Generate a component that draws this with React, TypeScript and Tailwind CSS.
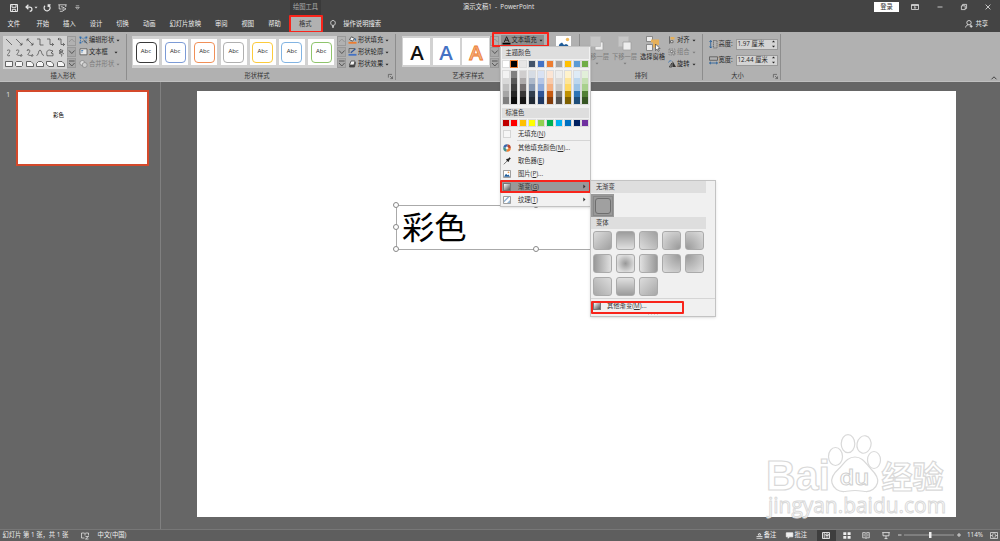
import type { ReactNode } from "react";
import clsx from "clsx";

const TABS = ["开始", "插入", "设计", "切换", "动画", "幻灯片放映", "审阅", "视图", "帮助"];

const SHAPE_STYLES = [
  "border-[#3a3a3a]",
  "border-[#7c9bd6]",
  "border-[#f09058]",
  "border-[#b0b0b0]",
  "border-[#fccb3c]",
  "border-[#82b4e2]",
  "border-[#8fc46c]",
];

// 每列：主色 + 五个深浅
const THEME_COLORS = [
  ["#ffffff", "#f2f2f2", "#d9d9d9", "#bfbfbf", "#a6a6a6", "#7f7f7f"],
  ["#000000", "#7f7f7f", "#595959", "#3f3f3f", "#262626", "#0c0c0c"],
  ["#e7e6e6", "#d0cece", "#aeabab", "#757070", "#3a3838", "#171616"],
  ["#44546a", "#d6dce4", "#adb9ca", "#8496b0", "#323f4f", "#222a35"],
  ["#4472c4", "#d9e2f3", "#b4c6e7", "#8eaadb", "#2f5496", "#1f3864"],
  ["#ed7d31", "#fbe5d5", "#f7cbac", "#f4b183", "#c55a11", "#833c0b"],
  ["#a5a5a5", "#ededed", "#dbdbdb", "#c9c9c9", "#7b7b7b", "#525252"],
  ["#ffc000", "#fff2cc", "#fee599", "#ffd965", "#bf9000", "#7f6000"],
  ["#5b9bd5", "#deebf6", "#bdd7ee", "#9cc3e5", "#2e75b5", "#1e4e79"],
  ["#70ad47", "#e2efd9", "#c5e0b3", "#a8d08d", "#538135", "#375623"],
];

const STANDARD_COLORS = [
  "#c00000", "#ff0000", "#ffc000", "#ffff00", "#92d050",
  "#00b050", "#00b0f0", "#0070c0", "#002060", "#7030a0",
];

const VARIANTS = [
  "linear-gradient(135deg,#dcdcdc,#a0a0a0)",
  "linear-gradient(180deg,#9c9c9c,#e0e0e0)",
  "linear-gradient(225deg,#a0a0a0,#dcdcdc)",
  "radial-gradient(circle at 100% 100%,#989898,#dedede)",
  "radial-gradient(circle at 0% 100%,#989898,#dedede)",
  "linear-gradient(90deg,#989898,#e0e0e0)",
  "radial-gradient(circle,#989898,#dedede 75%)",
  "linear-gradient(270deg,#989898,#e0e0e0)",
  "radial-gradient(circle at 100% 0%,#989898,#dedede)",
  "radial-gradient(circle at 0% 0%,#989898,#dedede)",
  "linear-gradient(45deg,#a8a8a8,#dcdcdc)",
  "linear-gradient(0deg,#9c9c9c,#e0e0e0)",
  "linear-gradient(315deg,#a8a8a8,#dcdcdc)",
];

function Svg({ w, h, children, className }: { w: number; h: number; children: ReactNode; className?: string }) {
  return (
    <svg
      width={w}
      height={h}
      viewBox={`0 0 ${w} ${h}`}
      fill="none"
      stroke="currentColor"
      strokeWidth="0.8"
      className={clsx("shrink-0 overflow-visible", className)}
    >
      {children}
    </svg>
  );
}

function Caret() {
  return (
    <Svg w={4} h={3}>
      <path d="M0.5 0.7h3L2 2.4z" fill="currentColor" stroke="none" />
    </Svg>
  );
}

function Launcher() {
  return (
    <Svg w={5} h={5} className="text-[#444]">
      <path d="M0.4 3.6V0.4H4M2 2l2.4 2.4M4.5 2.4v2.2H2.3" strokeWidth="0.6" />
    </Svg>
  );
}

// 库右侧的三段滚动按钮
function GalleryScroll() {
  return (
    <div className="flex w-[9px] flex-col gap-px">
      {["M2 6l2.8-3 2.8 3", "M2 3.5l2.8 3 2.8-3", "M2 3h5.6M2 5l2.8 3 2.8-3"].map((d, i) => (
        <div
          key={d}
          className={clsx("h-[10px] border border-[#999]", i === 0 ? "text-[#888]" : "bg-[#a8a8a8] text-[#333]")}
        >
          <Svg w={8} h={9} className="-ml-px -mt-px">
            <path d={d} strokeWidth="0.7" />
          </Svg>
        </div>
      ))}
    </div>
  );
}

function Command({ icon, label, disabled, wide }: { icon: ReactNode; label: string; disabled?: boolean; wide?: boolean }) {
  return (
    <div className={clsx("flex h-[12px] items-center gap-px", disabled && "text-[#7c7c7c]")}>
      {icon}
      <span>{label}</span>
      <span className={wide ? "ml-[5px]" : "ml-px"}>
        <Caret />
      </span>
    </div>
  );
}

function Group({ label, width, labelPad, launcher, children }: {
  label: string;
  width: string;
  labelPad?: string;
  launcher?: boolean;
  children: ReactNode;
}) {
  return (
    <section className={clsx("flex h-[46px] flex-col border-r border-[#8d8d8d]", width)}>
      <div className="flex h-[37px] items-start">{children}</div>
      <div className={clsx("relative flex h-[9px] items-center justify-center text-[#333]", labelPad)}>
        {label}
        {launcher && (
          <span className="absolute right-[2px] top-[3px]">
            <Launcher />
          </span>
        )}
      </div>
    </section>
  );
}

function TitleBar() {
  return (
    <header className="relative flex h-[15px] items-center bg-[#444] text-[#e6e6e6]">
      <div className="flex items-center pl-[10px]">
        <Svg w={8} h={8}>
          <path d="M0.5 0.5h7v7h-7zM2 0.5v2.8h4V0.5M2.3 7.4V5.3h3.4v2.1" strokeWidth="1" />
        </Svg>
        <Svg w={8} h={8} className="ml-[7px]">
          <path d="M3.4 0.8L1 3.1l2.4 2.2M1 3.1h3.7c3 0 3 4 0 4.2" strokeWidth="1.2" />
        </Svg>
        <span className="ml-px"><Caret /></span>
        <Svg w={8} h={8} className="ml-[5px]">
          <path d="M5.5 1.2A3 3 0 1 1 2 1.7M5.2 3V0.8h2.4" strokeWidth="1.2" />
        </Svg>
        <Svg w={9} h={8} className="ml-[7px]">
          <path d="M0.3 0.8h8.4M1.2 1v4h2.4M7.8 1v2M2.8 2.8h2M1.8 7.3h3M5 3.2l3 1.7-3 1.8z" />
        </Svg>
        <Svg w={5} h={5} className="ml-[8px]">
          <path d="M0.8 0.8h3.4M0.7 2.4h3.6L2.5 4.3z" strokeWidth="0.6" />
        </Svg>
      </div>
      <div className="absolute left-[290px] top-0 flex h-[15px] w-[31px] items-center justify-center bg-[#3a3a3a] pb-[2px] text-[#aaa]">
        绘图工具
      </div>
      <div className="absolute left-[463px] top-0 flex h-[13px] items-center whitespace-pre">
        {"演示文稿1  -  PowerPoint"}
      </div>
      <div className="ml-auto flex items-center pb-px">
        <span className="flex h-[10px] w-[25px] items-center justify-center bg-white text-[#333]">登录</span>
        <Svg w={8} h={6} className="ml-[12px]">
          <path d="M0.5 0.5h7v5h-7zM0.5 1.5h7M4 5V2.7M2.9 3.7L4 2.6l1.1 1.1" />
        </Svg>
        <Svg w={6} h={6} className="ml-[18px]">
          <path d="M0.5 3h5" />
        </Svg>
        <Svg w={6} h={6} className="ml-[18px]">
          <path d="M0.4 1.8h3.8v3.8H0.4zM1.6 1.8V0.4h4v4H4.2" />
        </Svg>
        <Svg w={6} h={6} className="ml-[18px] mr-[9px]">
          <path d="M0.6 0.6l4.8 4.8M5.4 0.6L0.6 5.4" />
        </Svg>
      </div>
    </header>
  );
}

function TabRow() {
  return (
    <nav className="flex h-[17px] items-center bg-[#444] text-[#efefef]">
      <span className="w-[36.5px] pl-[7.5px]">文件</span>
      <div className="flex gap-[14px]">
        {TABS.map((t) => (
          <span key={t}>{t}</span>
        ))}
      </div>
      <span className="ml-[8.5px] flex h-[18px] w-[34px] items-center justify-center rounded-[1px] border-2 border-[#f8241b] bg-[#b1b1b1] pr-[2px] text-[#333]">
        格式
      </span>
      <Svg w={6} h={8} className="ml-[7px]">
        <path d="M1.8 5.3C0 3.6 0.5 0.5 3 0.5s3 3.1 1.2 4.8zM2 6.4h2M2.3 7.5h1.4" />
      </Svg>
      <span className="ml-[7px]">操作说明搜索</span>
      <div className="ml-auto mr-[12px] flex items-center gap-[2px]">
        <Svg w={8} h={8}>
          <circle cx="4" cy="2.7" r="2.2" />
          <path d="M0.6 7.5c0.2-1.7 1.4-2.5 2.6-2.6M4.8 4.9l0.8 0.6M6.2 4.8v3M4.7 6.3h3" />
        </Svg>
        共享
      </div>
    </nav>
  );
}

const SHAPES = [
  "M1 1l6 6", "M1 1l6 6M7 4.8V7H4.8", "M1 1l6 6M7 4.8V7H4.8M1 3.2V1h2.2",
  "M1 1h3v6h3.5", "M1 1h3v5.5h3.5M6 5l1.6 1.5L6 8", "M1 1h3v5.5h3.5M6 5l1.6 1.5L6 8M2.2 0L1 1l1.2 1.4",
  "M2 1.5c4-2 3 1.5 1.5 3S2 7.5 5 6.5", "M1 1.5c4-2 3 1.5 1.5 3s0 2 4 2M6 5l1 1.5L5.5 8",
  "M1 1.5c4-2 3 1.5 1.5 3s0 2 4 2M6 5l1 1.5L5.5 8M2.5 0L1 1.5", "M0.5 6.5C3 6.5 2 1 4 1s1 5.5 4 5.5",
  "M3.5 1C0.5 1.5 0.5 3 1 6.8h6V4.5L5 4l2-2z", "M4 0.5L2 2l3 1-3 1 3 1.5L4.5 7.5M3 0.5l3 1-1 2 2 1.5",
];

const BOXES = [
  "M0.5 1.5h7v5h-7z", "M1.5 1.5h5l1 1v3l-1 1h-5l-1-1v-3z", "M0.5 1.5h4.5l2.5 2.5v2.5h-7z",
  "M0.5 6.5v-3l2-2h3l2 2v3z", "M0.5 1.5h4.5l2.5 2.5v2.5H3l-2.5-2z", "M0.5 6.5v-4l1-1h3.5l2.5 2.5v2.5z",
];

function InsertShapes() {
  return (
    <Group label="插入形状" width="w-[127px]">
      <div className="ml-[3px] mt-[2px] flex">
        <div className="grid h-[33px] w-[64px] grid-cols-6 items-center justify-items-center bg-[#d2d2d2] px-px text-[#444]">
          {SHAPES.map((d) => (
            <Svg key={d} w={8} h={8}>
              <path d={d} strokeWidth="0.7" />
            </Svg>
          ))}
          {BOXES.map((d) => (
            <Svg key={d} w={8} h={8}>
              <path d={d} fill="#f6f6f6" strokeWidth="0.8" />
            </Svg>
          ))}
        </div>
        <GalleryScroll />
      </div>
      <div className="ml-[3px]">
        <Command
          label="编辑形状"
          icon={
            <Svg w={9} h={8} className="text-[#2f6eb0]">
              <path d="M1.5 1.5L4 2.5l3-1v5l-3-1-2.5 1z" strokeDasharray="1.2 0.8" />
              <path d="M0.5 0.5h1.8v1.8H0.5zM6.5 0.5h1.8v1.8H6.5zM0.5 5.8h1.8v1.8H0.5z" fill="currentColor" stroke="none" />
              <path d="M4.5 4l3.8 3.5" stroke="#333" />
            </Svg>
          }
        />
        <Command
          wide
          label="文本框"
          icon={
            <Svg w={9} h={8} className="text-[#555]">
              <path d="M1 0.8h7v6H1z" fill="#e8e8e8" />
              <path d="M2.2 2.5h2M2.2 4h1.5" stroke="#2f6eb0" />
            </Svg>
          }
        />
        <Command
          disabled
          label="合并形状"
          icon={
            <Svg w={9} h={8} className="text-[#888]">
              <circle cx="3.3" cy="3" r="2.5" fill="#ddd" />
              <circle cx="5.7" cy="5" r="2.5" fill="#ccc" />
            </Svg>
          }
        />
      </div>
    </Group>
  );
}

function ShapeStylesGroup() {
  return (
    <Group label="形状样式" width="w-[269px]" labelPad="pr-[8px]" launcher>
      <div className="ml-[5px] mt-[2px] flex">
        <div className="flex h-[32px] w-[205px] items-center gap-[3.2px] bg-[#d2d2d2] pl-px">
          {SHAPE_STYLES.map((c) => (
            <div key={c} className="flex h-[26px] w-[26px] items-center justify-center bg-white">
              <div className={clsx("flex h-[21px] w-[21px] items-center justify-center rounded-[4px] border bg-white pb-[3px] text-[6px]", c)}>
                Abc
              </div>
            </div>
          ))}
        </div>
        <GalleryScroll />
      </div>
      <div className="ml-[2px]">
        <Command
          label="形状填充"
          icon={
            <Svg w={9} h={8} className="text-[#333]">
              <path d="M3.5 0.8L1.5 3.5l3 1.7 2-2.7z" fill="#f5f5f5" />
              <path d="M7 2.5l0.8 2" stroke="#2f6eb0" strokeWidth="1.2" />
              <path d="M0.5 6.8h8" stroke="#ed7d31" strokeWidth="1.8" />
            </Svg>
          }
        />
        <Command
          label="形状轮廓"
          icon={
            <Svg w={9} h={8} className="text-[#333]">
              <path d="M1 0.5h6M1 0.5V5" stroke="#555" />
              <path d="M2.8 4.7l4.7-4" stroke="#2f5496" strokeWidth="1.2" />
              <path d="M0.5 6.8h8" stroke="#4472c4" strokeWidth="1.8" />
            </Svg>
          }
        />
        <Command
          label="形状效果"
          icon={
            <Svg w={9} h={8} className="text-[#444]">
              <path d="M2.5 2.5h5l-1 4.5h-5z" fill="#444" />
              <path d="M3 1h4L6 5H1.5z" fill="#f4f4f4" />
            </Svg>
          }
        />
      </div>
    </Group>
  );
}

function WordArtGroup() {
  return (
    <Group label="艺术字样式" width="w-[184px]" labelPad="pr-[39px]">
      <div className="ml-[6px] mt-[2px] flex">
        <div className="flex h-[31px] w-[88px] items-center gap-[2.5px] bg-[#d2d2d2] pl-px">
          {["#111", "#4472c4", "#f4b183"].map((c, i) => (
            <div key={c} className="flex h-[27px] w-[27px] items-center justify-center bg-white">
              <svg width="20" height="22" viewBox="0 0 20 22" className="overflow-visible">
                <text
                  x="10"
                  y="18.5"
                  textAnchor="middle"
                  fontSize="20.5"
                  fontWeight="600"
                  fill={c}
                  stroke={i === 2 ? "#ed7d31" : "none"}
                  strokeWidth="0.8"
                >
                  A
                </text>
              </svg>
            </div>
          ))}
        </div>
        <GalleryScroll />
      </div>
      <div className="relative ml-[1.5px] mt-px">
        <div className="flex h-[10px] w-[43px] items-center bg-[#8f8f8f]">
          <Svg w={9} h={9} className="ml-px">
            <path d="M0.5 7.6h8" stroke="#000" strokeWidth="1.8" />
            <path d="M2.3 6l2.3-5.3L7 6M3.2 4.2h3" stroke="#222" strokeWidth="1" />
          </Svg>
          <span className="ml-px">文本填充</span>
          <span className="ml-[2px]"><Caret /></span>
        </div>
        <div className="absolute -left-[9px] -top-[3px] h-[15px] w-[57px] rounded-[1px] border-2 border-[#f8241b]" />
      </div>
      <Svg w={15} h={15} className="ml-[12.5px] mt-[2px]">
        <path d="M0 0h15v15H0z" fill="#fff" stroke="none" />
        <circle cx="11.5" cy="3.5" r="1.7" fill="#f0b95a" stroke="none" />
        <path d="M2 12l1.500-4 2.500-1.500L8 9l2-1 2 1 1 3z" fill="#1f5c99" stroke="none" />
      </Svg>
    </Group>
  );
}

function BigButton({ icon, label, width, disabled }: { icon: ReactNode; label: string; width: string; disabled?: boolean }) {
  return (
    <div className={clsx("mt-[2px] flex flex-col items-center", width, disabled && "text-[#7c7c7c]")}>
      <div className="h-[17px]">{icon}</div>
      <span>{label}</span>
      {disabled && <span className="mt-px"><Caret /></span>}
    </div>
  );
}

function ArrangeGroup() {
  return (
    <Group label="排列" width="w-[123px]">
      <BigButton
        disabled
        width="w-[27px] ml-[3px]"
        label="上移一层"
        icon={
          <Svg w={14} h={15} className="text-[#a0a0a0]">
            <path d="M5 6h8v8H5z" fill="#eee" />
            <path d="M0.5 0.5h10v10h-10z" fill="#c6c6c6" stroke="#bbb" />
          </Svg>
        }
      />
      <BigButton
        disabled
        width="w-[27px] ml-px"
        label="下移一层"
        icon={
          <Svg w={14} h={15} className="text-[#a0a0a0]">
            <path d="M0.5 0.5h10v10h-10z" fill="#c6c6c6" stroke="#bbb" />
            <path d="M5 6h8v8H5z" fill="#eee" />
          </Svg>
        }
      />
      <BigButton
        width="w-[27px] ml-px"
        label="选择窗格"
        icon={
          <Svg w={14} h={16} className="text-[#777]">
            <path d="M0.5 0.5h6v5h-6zM0.5 8.5h6v6h-6z" fill="#eee" />
            <path d="M5 5h6.5v2.5h-3v4" stroke="#e5b05a" strokeWidth="3" />
            <path d="M9.5 8v6.5l1.6-1.4 1.1 2.2 1-.5-1.1-2.2h2z" fill="#fff" stroke="#333" strokeWidth="0.6" />
          </Svg>
        }
      />
      <div className="ml-[2px]">
        <Command
          label="对齐"
          icon={
            <Svg w={8} h={8} className="text-[#555]">
              <path d="M1.5 0.3v7.4" />
              <path d="M2.5 1h4v2.5h-4z" fill="#e5b05a" stroke="none" />
              <path d="M2.5 4.7H5v2H2.5z" fill="#eee" />
            </Svg>
          }
        />
        <Command
          disabled
          label="组合"
          icon={
            <Svg w={8} h={8}>
              <path d="M1 1h6v6H1z" strokeDasharray="1.5 1" />
              <path d="M2.5 2.5H5v2H2.5zM4 4h2.5v2H4z" fill="#ddd" />
            </Svg>
          }
        />
        <Command
          label="旋转"
          icon={
            <Svg w={8} h={8} className="text-[#333]">
              <path d="M4.5 7V1L8 7z" fill="#333" stroke="none" />
              <path d="M3.8 7V3L1.3 7z" />
              <path d="M0.5 2.5C1 0.8 2.5 0.5 3.5 1" stroke="#2f6eb0" />
            </Svg>
          }
        />
      </div>
    </Group>
  );
}

function SizeField({ label, value, vertical }: { label: string; value: string; vertical?: boolean }) {
  return (
    <div className="flex h-[12px] items-center">
      <Svg w={9} h={9} className="text-[#555]">
        {vertical ? (
          <>
            <path d="M4.5 0.5H8V8H4.5z" strokeDasharray="1.2 0.7" />
            <path d="M1.7 0.5V8M0.5 2l1.2-1.5L2.9 2M0.5 6.5L1.7 8l1.2-1.5" stroke="#1f5c99" />
          </>
        ) : (
          <>
            <path d="M0.5 0.8h8v3.5h-8z" />
            <path d="M0.5 7h8M2 5.8L0.5 7 2 8.2M7 5.8L8.5 7 7 8.2" stroke="#1f5c99" />
          </>
        )}
      </Svg>
      <span className="ml-px w-[17px]">{label}</span>
      <div className="flex h-[11px] w-[42px] items-center justify-between border border-[#999] bg-[#d4d4d4] pl-px pr-[2px]">
        {value}
        <Svg w={3} h={8}>
          <path d="M0 2.2L1.5 0.6 3 2.2zM0 5.8l1.5 1.6L3 5.8z" fill="currentColor" stroke="none" />
        </Svg>
      </div>
    </div>
  );
}

function Ribbon() {
  return (
    <div className="flex h-[50px] border-b border-[#c0c0c0] bg-[#b1b1b1] pt-[2px] text-[#262626]">
      <InsertShapes />
      <ShapeStylesGroup />
      <WordArtGroup />
      <ArrangeGroup />
      <Group label="大小" width="w-[78px]" labelPad="pr-[8px]" launcher>
        <div className="ml-[5.5px] mt-[4px] flex flex-col gap-[4px]">
          <SizeField label="高度:" value="1.97 厘米" vertical />
          <SizeField label="宽度:" value="12.44 厘米" />
        </div>
      </Group>
      <Svg w={6} h={4} className="mb-px ml-auto mr-[3px] self-end">
        <path d="M0.5 3.3L3 0.8l2.5 2.5" />
      </Svg>
    </div>
  );
}

function MenuRow({ icon, label, hotkey, tail, arrow, active }: {
  icon: ReactNode;
  label: string;
  hotkey?: string;
  tail?: string;
  arrow?: boolean;
  active?: boolean;
}) {
  return (
    <div className={clsx("relative flex h-[13px] items-center pl-[2px]", active && "bg-[#999]")}>
      <span className="flex w-[15px]">{icon}</span>
      <span>
        {label}
        {hotkey && <>(<u className="underline-offset-1">{hotkey}</u>)</>}
        {tail}
      </span>
      {arrow && (
        <Svg w={3} h={5} className="ml-auto mr-[4px]">
          <path d="M0.3 0.6v3.8L2.5 2.5z" fill="currentColor" stroke="none" />
        </Svg>
      )}
      {active && <div className="absolute -inset-x-px inset-y-0 rounded-[1px] border-2 border-[#f8241b]" />}
    </div>
  );
}

function GradientIcon() {
  return <span className="block h-[8px] w-[8px] border border-[#777] bg-linear-to-br from-white to-[#555]" />;
}

function FillMenu() {
  return (
    <div className="absolute left-[500px] top-[46px] h-[161px] w-[91px] border border-[#c3c3c3] bg-[#f1f1f1] text-[#333] shadow-sm">
      <div className="mx-px flex h-[11.5px] items-center bg-[#dedede] pl-[3.5px]">主题颜色</div>
      <div className="flex justify-between px-[1.5px] pt-[2.5px]">
        {THEME_COLORS.map(([base, ...shades], i) => (
          <div key={base} className="w-[6px]">
            <div
              className={clsx("h-[6px] outline outline-1", i === 1 ? "outline-[#ed7d31]" : "outline-[#dcdcdc]")}
              style={{ background: base }}
            />
            <div className="mt-[4px] outline outline-1 outline-[#dcdcdc]">
              {shades.map((s) => (
                <div key={s} className="h-[6.5px]" style={{ background: s }} />
              ))}
            </div>
          </div>
        ))}
      </div>
      <div className="mx-px mt-[4px] flex h-[10px] items-center bg-[#dedede] pl-[3.5px]">标准色</div>
      <div className="flex justify-between px-[1.5px] pt-[2.5px]">
        {STANDARD_COLORS.map((c) => (
          <div key={c} className="h-[6px] w-[6px] outline outline-1 outline-[#dcdcdc]" style={{ background: c }} />
        ))}
      </div>
      <div className="mt-px">
        <MenuRow icon={<span className="h-[8px] w-[8px] border border-[#d5d5d5] bg-[#f6f6f6]" />} label="无填充" hotkey="N" />
      </div>
      <div className="ml-[16px] h-px bg-[#d5d5d5]" />
      <MenuRow
        label="其他填充颜色"
        hotkey="M"
        tail="..."
        icon={
          <Svg w={8} h={8}>
            <circle cx="4" cy="4" r="2.6" stroke="#ed7d31" strokeWidth="2.4" strokeDasharray="4.5 11.84" />
            <circle cx="4" cy="4" r="2.6" stroke="#3f8f8a" strokeWidth="2.4" strokeDasharray="4 12.34" strokeDashoffset="-4.5" />
            <circle cx="4" cy="4" r="2.6" stroke="#3a66ad" strokeWidth="2.4" strokeDasharray="4 12.34" strokeDashoffset="-8.5" />
            <circle cx="4" cy="4" r="2.6" stroke="#b8452e" strokeWidth="2.4" strokeDasharray="3.84 12.5" strokeDashoffset="-12.5" />
          </Svg>
        }
      />
      <MenuRow
        label="取色器"
        hotkey="E"
        icon={
          <Svg w={8} h={8}>
            <path d="M0.8 7.3l4-4" stroke="#555" />
            <path d="M3.6 2.2l2.2 2.2M4.7 3.3l2.5-2.4" stroke="#222" strokeWidth="1.7" />
          </Svg>
        }
      />
      <MenuRow
        label="图片"
        hotkey="P"
        tail="..."
        icon={
          <Svg w={8} h={8}>
            <path d="M0.5 0.5h7v7h-7z" fill="#fff" stroke="#888" />
            <path d="M1 6.8l2-3 1.5 1.5 1-.8L7 6.8z" fill="#1f5c99" stroke="none" />
            <circle cx="5.5" cy="2.3" r="0.9" fill="#ed9d51" stroke="none" />
          </Svg>
        }
      />
      <MenuRow active arrow label="渐变" hotkey="G" icon={<GradientIcon />} />
      <MenuRow
        arrow
        label="纹理"
        hotkey="T"
        icon={
          <Svg w={8} h={8}>
            <path d="M0.5 0.5h7v7h-7z" fill="#fff" stroke="#888" />
            <path d="M1 4.5L4.5 1h2L1 6.5zM4 7l3-3v3z" fill="#8fb2d2" stroke="none" />
          </Svg>
        }
      />
    </div>
  );
}

function GradientMenu() {
  return (
    <div className="absolute left-[590px] top-[180px] h-[137px] w-[126px] border border-[#c3c3c3] bg-[#f0f0f0] text-[#333] shadow-sm">
      <div className="flex h-[12px] w-[115px] items-center bg-[#dedede] pl-[5px]">无渐变</div>
      <div className="mt-px flex h-[23px] w-[23px] items-center justify-center bg-[#999]">
        <div className="flex h-[20px] w-[20px] border border-[#888] p-px">
          <div className="flex-1 rounded-[3px] border border-[#6e6e6e] bg-[#a0a0a0]" />
        </div>
      </div>
      <div className="flex h-[12px] w-[115px] items-center bg-[#dedede] pl-[5px]">变体</div>
      <div className="grid w-[117px] grid-cols-5 gap-y-[4px] pl-[2px] pt-[2px]">
        {VARIANTS.map((g) => (
          <div key={g} className="h-[19px] w-[19px] rounded-[3px] border border-[#aaa]" style={{ background: g }} />
        ))}
      </div>
      <div className="mt-[2px] border-t border-[#d5d5d5]" />
      <div className="mt-px flex h-[12px] items-center">
        <span className="ml-[2px] w-[14px]"><GradientIcon /></span>
        <span>其他渐变(<u className="underline-offset-1">M</u>)...</span>
      </div>
      <Svg w={10} h={2} className="absolute bottom-[1.5px] left-[57px] text-[#aaa]">
        <path d="M0 1h10" strokeDasharray="1 2" />
      </Svg>
      <div className="absolute left-0 top-[120px] h-[13px] w-[93px] rounded-[1px] border-2 border-[#f8241b]" />
    </div>
  );
}

function Handle({ className }: { className: string }) {
  return <span className={clsx("absolute h-[6px] w-[6px] rounded-full border border-[#888] bg-white", className)} />;
}

function Watermark() {
  return (
    <svg
      width="186"
      height="90"
      viewBox="0 0 186 90"
      className="absolute left-[764px] top-[431px] overflow-visible"
      fill="#fff"
      stroke="#d9d9d9"
      strokeWidth="1.2"
    >
      <text x="2" y="59" fontSize="42" fontFamily="Liberation Sans" fontWeight="700" textLength="64" lengthAdjust="spacingAndGlyphs">
        Bai
      </text>
      <ellipse cx="71.5" cy="25.5" rx="7" ry="9" />
      <ellipse cx="84" cy="12.7" rx="6.8" ry="9" />
      <ellipse cx="100" cy="13.5" rx="7" ry="8.8" transform="rotate(12 100 13.5)" />
      <ellipse cx="110" cy="29" rx="6.5" ry="8.5" />
      <path d="M91 26c8 0 11 7 16 12s8 9 6.5 14s-6 9-12 8.5c-4-.5-7-1-10.5-1s-6.5.5-10.5 1c-6 .5-11-3-12.5-8.5s1.5-9.5 6.5-14s8-12 16.5-12z" />
      <text x="75.5" y="54" fontSize="22" fontFamily="Open Sans" fontWeight="600" stroke="#cfcfcf" strokeWidth="1" textLength="30" lengthAdjust="spacingAndGlyphs">
        du
      </text>
      <text x="117.5" y="57" fontSize="31" fontFamily="Noto Sans CJK SC" fontWeight="700" textLength="62">
        经验
      </text>
      <text x="4" y="82" fontSize="21.5" fontFamily="Open Sans" fontWeight="500" strokeWidth="1" textLength="178" lengthAdjust="spacingAndGlyphs">
        jingyan.baidu.com
      </text>
    </svg>
  );
}

function Workspace() {
  return (
    <main className="flex h-[447px] bg-[#666]">
      <aside className="flex w-[161px] border-r border-[#808080] pt-[8px]">
        <span className="w-[16px] pl-[6px] pt-px text-[7.5px] leading-none text-[#ddd]">1</span>
        <div className="h-[76px] w-[133px] border-2 border-[#d4492b] bg-white pl-[35px] pt-[18.5px] text-[5.4px] font-medium text-[#222]">
          彩色
        </div>
      </aside>
      <div className="flex-1 pl-[36px] pt-[9px]">
        <div className="h-[426px] w-[759px] bg-white pl-[199px] pt-[114px]">
          <div className="relative h-[45px] w-[279px] border border-[#aaa] pl-[5px] pt-[4px] text-[32.3px] leading-[32px] text-black">
            彩色
            <Handle className="-left-[4px] -top-[4px]" />
            <Handle className="-left-[4px] top-[18px]" />
            <Handle className="-bottom-[3px] -left-[4px]" />
            <Handle className="-top-[4px] left-[136px]" />
            <Handle className="-bottom-[3px] left-[136px]" />
          </div>
        </div>
      </div>
    </main>
  );
}

function StatusBar() {
  return (
    <footer className="flex h-[12px] items-center border-t border-[#777] bg-[#5e5e5e] pb-px pl-[2.5px] text-[#efefef]">
      <span className="w-[78px]">幻灯片 第 1 张，共 1 张</span>
      <Svg w={8} h={7}>
        <path d="M3.5 6h-3V1h3l0.5 0.5 0.5-0.5h3v2.5M4 1.5v2M4.5 4.5h3L4.5 7h3" strokeWidth="0.7" />
      </Svg>
      <span className="ml-[9px]">中文(中国)</span>
      <div className="ml-auto flex items-center">
        <Svg w={7} h={7} className="mr-px">
          <path d="M0.5 4.5h6M0.5 6.3h6M2 3l1.5-2L5 3z" />
        </Svg>
        备注
        <Svg w={7} h={7} className="ml-[10px] mr-px">
          <path d="M0.3 0.8h6.5v4H3.5L2.2 6.3V4.8H0.3z" fill="currentColor" />
        </Svg>
        批注
        <span className="ml-[10px] flex h-[11px] w-[19px] items-center justify-center bg-[#3e3e3e]">
          <Svg w={8} h={7}>
            <path d="M0.5 0.5h7v6h-7zM2.2 0.5v6M3.8 2h2.5v1.5H3.8zM3.5 5h3" strokeWidth="0.9" />
          </Svg>
        </span>
        <Svg w={8} h={7} className="ml-[7px]">
          <path d="M0.3 0.3h3v2.6h-3zM4.6 0.3h3v2.6h-3zM0.3 4.1h3v2.6h-3zM4.6 4.1h3v2.6h-3z" fill="currentColor" stroke="none" />
        </Svg>
        <Svg w={8} h={7} className="ml-[11px]">
          <path d="M4 1.2L3 0.6H0.7v5.2H3l1 0.7 1-0.7h2.3V0.6H5zM4 1.2v5M1.5 2.2h1.3M1.5 3.8h1.3M5.2 2.2h1.3M5.2 3.8h1.3" strokeWidth="0.7" />
        </Svg>
        <Svg w={8} h={7} className="ml-[12px]">
          <path d="M0.2 0.6h7.6M1 0.8v3h6v-3M4 4v2.5M2.5 6.6h3" />
        </Svg>
        <Svg w={4} h={4} className="ml-[8px]">
          <path d="M0 2h3.5" />
        </Svg>
        <Svg w={50} h={8} className="mx-[2px]">
          <path d="M0 4h50" stroke="#bbb" strokeWidth="0.7" />
          <path d="M25 1h2.5v6H25z" fill="currentColor" stroke="none" />
        </Svg>
        <Svg w={4} h={4} className="ml-px mr-[6px]">
          <path d="M0 2h4M2 0v4" />
        </Svg>
        <span>114%</span>
        <Svg w={8} h={7} className="ml-[7px] mr-[2px]">
          <path d="M0.5 0.5h7v6h-7zM4 0.5v2M4 4.5v2M0.5 3.5h2.3M5.2 3.5h2.3M2 1.8l1 0.8M6 1.8l-1 0.8M2 5.2l1-0.8M6 5.2l-1-0.8" strokeWidth="0.7" />
        </Svg>
      </div>
    </footer>
  );
}

export default function App() {
  return (
    <div className="relative flex h-[541px] w-[1000px] flex-col overflow-hidden whitespace-nowrap bg-[#666] font-['Open_Sans','Noto_Sans_CJK_SC',sans-serif] text-[6.3px] leading-[8px]">
      <TitleBar />
      <TabRow />
      <Ribbon />
      <Workspace />
      <StatusBar />
      <Watermark />
      <FillMenu />
      <GradientMenu />
    </div>
  );
}
